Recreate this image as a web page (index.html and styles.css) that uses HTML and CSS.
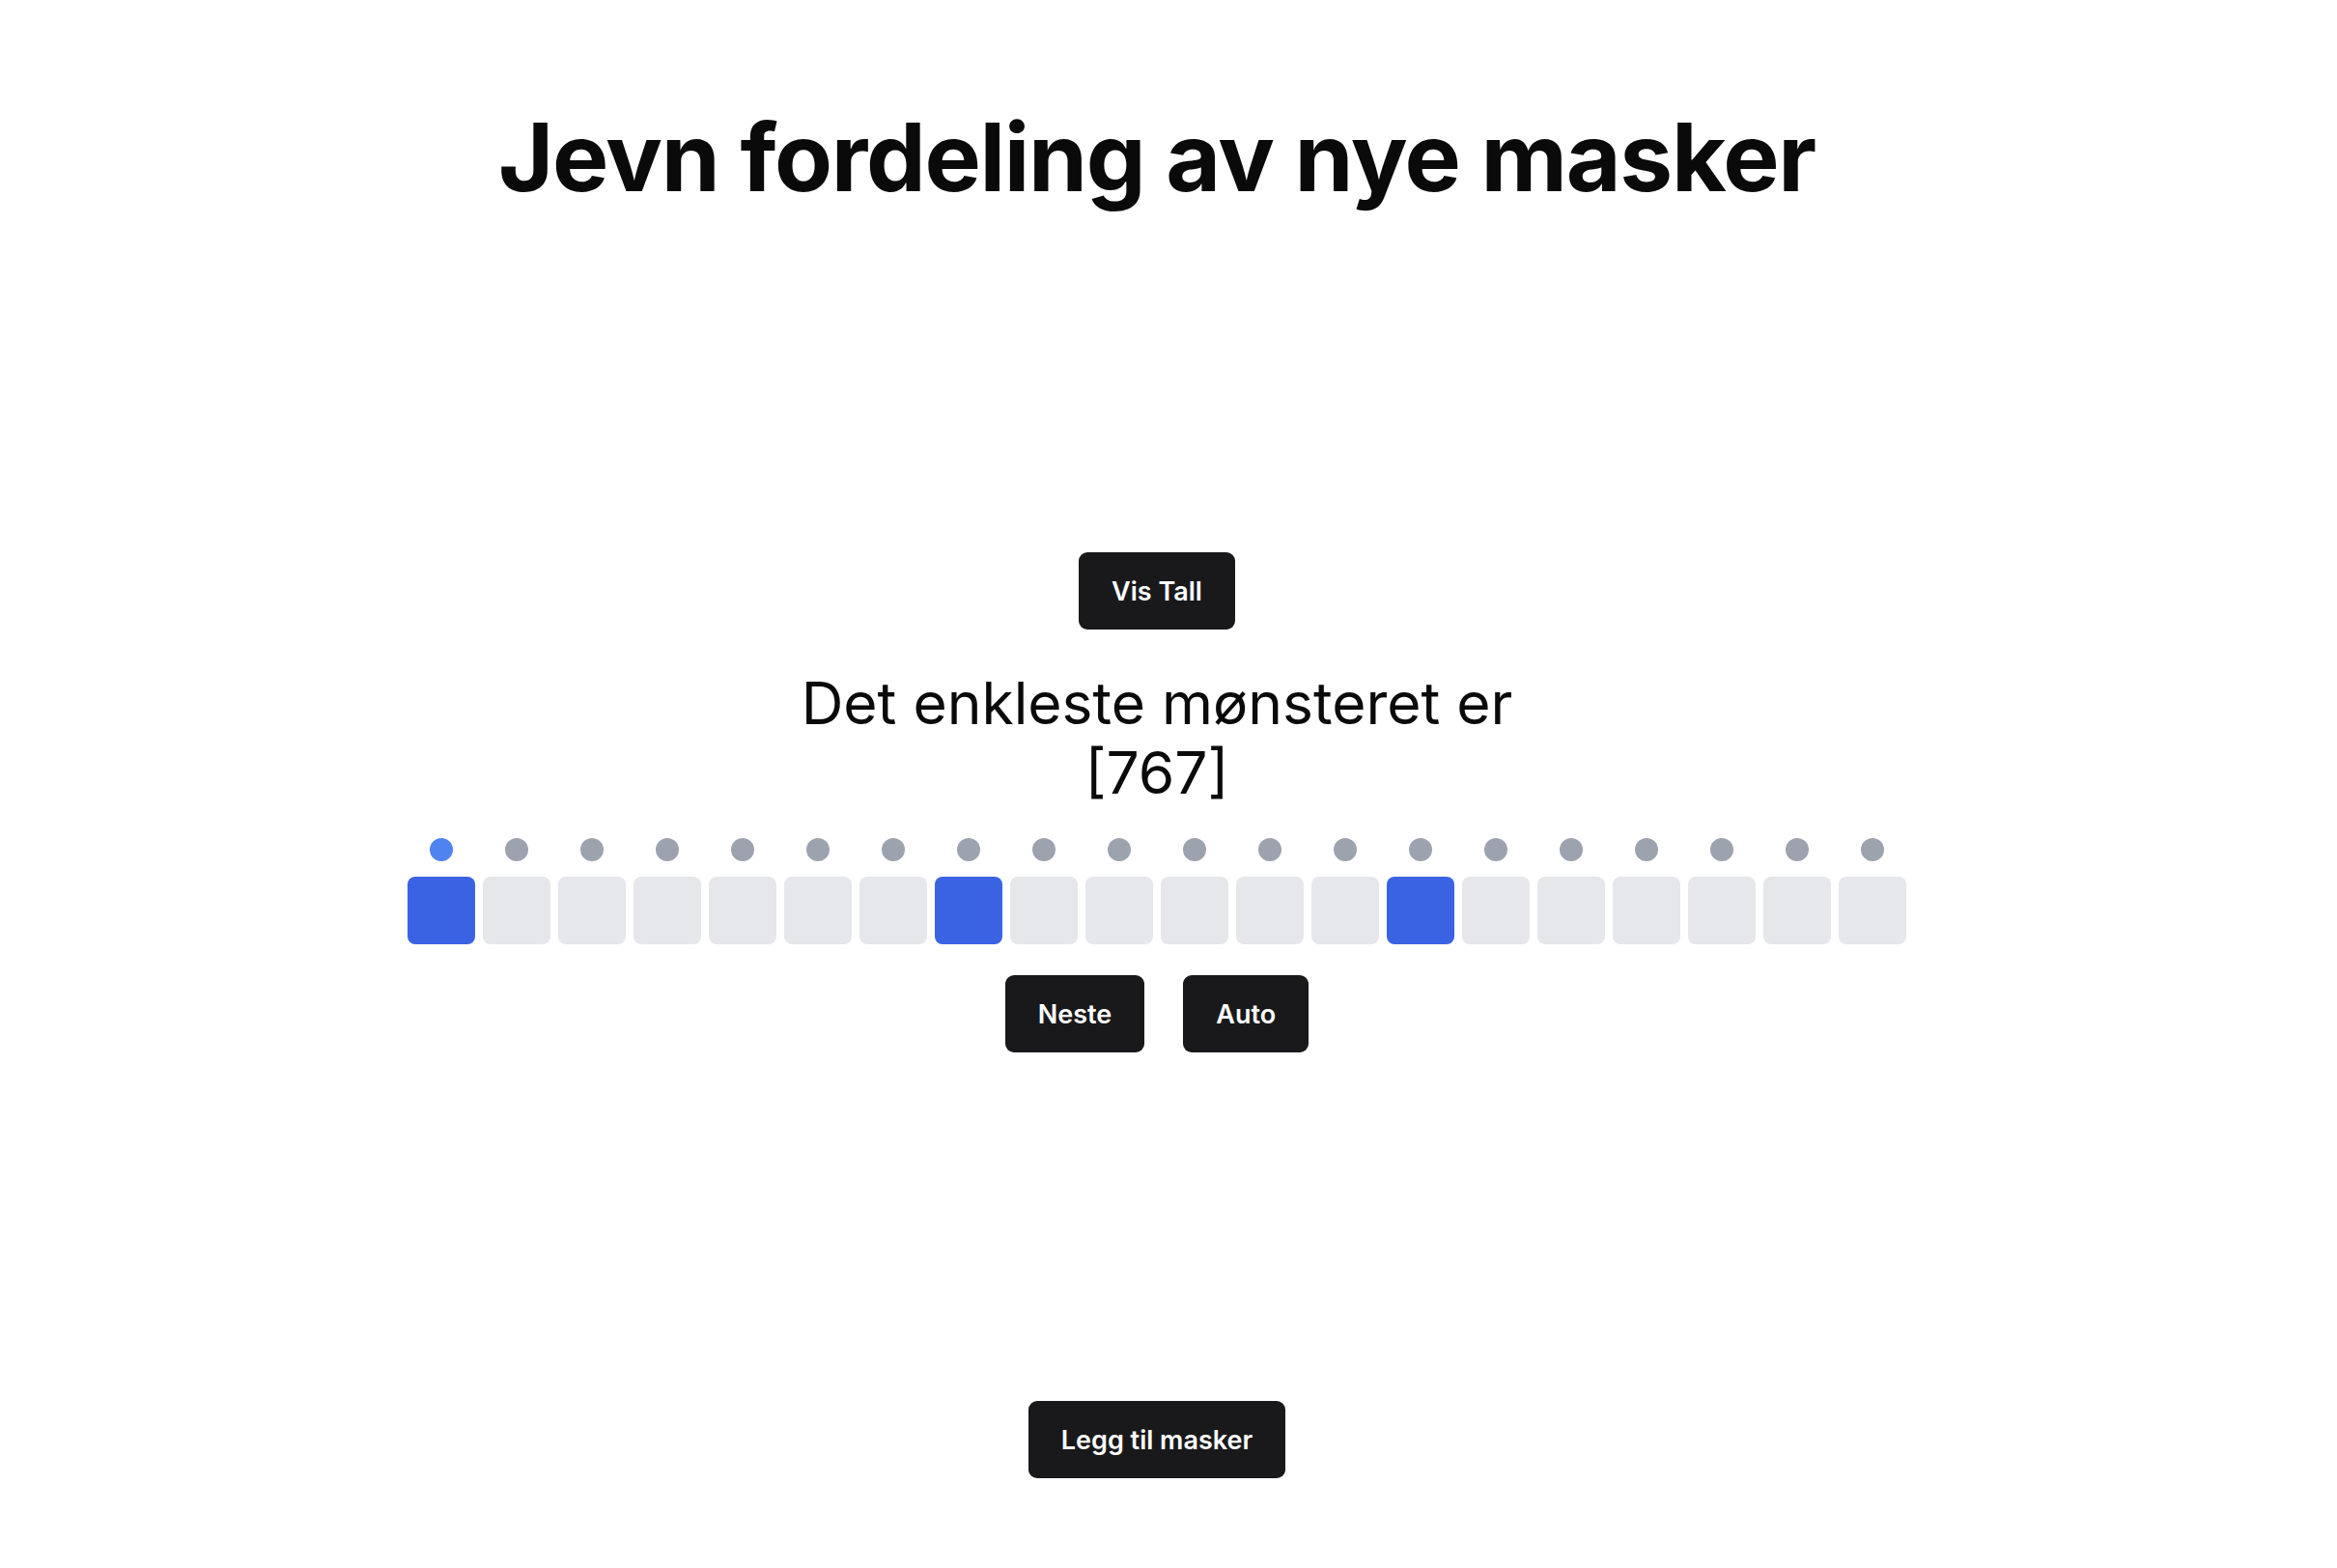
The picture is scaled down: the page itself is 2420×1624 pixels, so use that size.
FILE: index.html
```html
<!DOCTYPE html>
<html lang="no">
<head>
<meta charset="utf-8">
<title>Jevn fordeling av nye masker</title>
<link rel="stylesheet" href="styles.css">
</head>
<body>
<main class="page">
  <h1 class="title">Jevn fordeling av nye masker</h1>
  <button class="btn btn-top">Vis Tall</button>
  <p class="pattern">Det enkleste mønsteret er [767]</p>
  <div class="dots">
    <span class="dot active"></span><span class="dot"></span><span class="dot"></span><span class="dot"></span><span class="dot"></span>
    <span class="dot"></span><span class="dot"></span><span class="dot"></span><span class="dot"></span><span class="dot"></span>
    <span class="dot"></span><span class="dot"></span><span class="dot"></span><span class="dot"></span><span class="dot"></span>
    <span class="dot"></span><span class="dot"></span><span class="dot"></span><span class="dot"></span><span class="dot"></span>
  </div>
  <div class="cells">
    <span class="cell on"></span><span class="cell"></span><span class="cell"></span><span class="cell"></span><span class="cell"></span>
    <span class="cell"></span><span class="cell"></span><span class="cell on"></span><span class="cell"></span><span class="cell"></span>
    <span class="cell"></span><span class="cell"></span><span class="cell"></span><span class="cell on"></span><span class="cell"></span>
    <span class="cell"></span><span class="cell"></span><span class="cell"></span><span class="cell"></span><span class="cell"></span>
  </div>
  <div class="controls">
    <button class="btn">Neste</button>
    <button class="btn">Auto</button>
  </div>
  <button class="btn btn-bottom">Legg til masker</button>
</main>
</body>
</html>
```
FILE: styles.css
```css
html, body {
  margin: 0;
  padding: 0;
  background: #ffffff;
}

body {
  font-family: Inter, "Noto Sans", "Liberation Sans", sans-serif;
  color: #0a0a0a;
}

.page {
  width: 2396px;
  display: flex;
  flex-direction: column;
  align-items: center;
}

.title {
  margin: 114px 0 0;
  font-size: 98px;
  line-height: 98px;
  font-weight: 700;
  color: #0a0a0b;
  letter-spacing: -1.3px;
}

.btn {
  height: 80px;
  padding: 0 34px;
  border: none;
  border-radius: 9px;
  background: #19191b;
  color: #ffffff;
  font-family: Inter, "Noto Sans", "Liberation Sans", sans-serif;
  font-size: 27px;
  font-weight: 600;
  display: inline-flex;
  align-items: center;
  justify-content: center;
}

.btn-top {
  margin-top: 360px;
}

.pattern {
  margin: 40px 0 0;
  max-width: 800px;
  text-align: center;
  font-size: 60.5px;
  line-height: 72px;
  font-weight: 400;
  color: #0a0a0a;
}

.dots {
  margin-top: 32px;
  display: flex;
  gap: 8px;
}

.dot {
  width: 70px;
  height: 24px;
  display: flex;
  justify-content: center;
}

.dot::before {
  content: "";
  width: 24px;
  height: 24px;
  border-radius: 50%;
  background: #9ca3af;
}

.dot.active::before {
  background: #4f83f0;
}

.cells {
  margin-top: 16px;
  display: flex;
  gap: 8px;
}

.cell {
  width: 70px;
  height: 70px;
  border-radius: 8px;
  background: #e5e7eb;
}

.cell.on {
  background: #3a63e3;
}

.controls {
  margin-top: 32px;
  display: flex;
  gap: 40px;
}

.btn-bottom {
  margin-top: 361px;
}
```
